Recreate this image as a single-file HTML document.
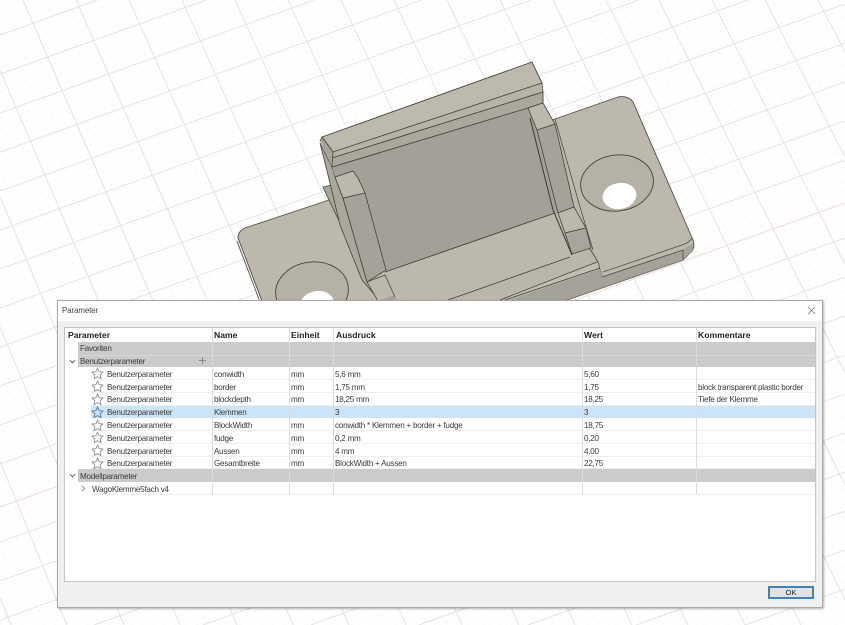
<!DOCTYPE html>
<html>
<head>
<meta charset="utf-8">
<style>
html,body{margin:0;padding:0;background:#fff;width:845px;height:625px;overflow:hidden}
#p{position:relative;width:845px;height:625px;overflow:hidden;background:#fff;font-family:"Liberation Sans",sans-serif;color:#3a3a3a}
svg.bg{position:absolute;left:0;top:0;filter:blur(.3px)}
#d{position:absolute;left:57px;top:300px;width:764px;height:306px;background:#f0f0f0;border:1px solid #a8a8a8;box-shadow:1px 1px 2px rgba(0,0,0,.3)}
#tb{position:absolute;left:0;top:0;width:764px;height:20px;background:#fff}
#tt{position:absolute;left:4px;top:5px;font-size:8px;letter-spacing:-.15px;line-height:10px;color:#444;filter:blur(.25px)}
#t{position:absolute;left:6px;top:26px;width:750px;height:253px;background:#fff;border:1px solid #c4c4c4;overflow:hidden}
.a{position:absolute;white-space:nowrap;font-size:8.1px;letter-spacing:-.24px;line-height:13px;height:13px;filter:blur(.25px)}
.h{font-weight:bold;font-size:8.6px;letter-spacing:0;color:#222;line-height:14px}
.g{position:absolute;left:13px;width:737px;height:12.8px;background:#cbcbcb}
.r{position:absolute;left:26px;width:724px;height:12.8px;border-bottom:1px solid #efefef;box-sizing:border-box}
.v{position:absolute;width:1px;background:#dcdcdc;top:0;height:167px}
.s{position:absolute;left:26px;width:13px;height:13px}
#ok{position:absolute;left:710px;top:285px;width:42px;height:9px;border:2px solid #3f83b8;background:#dfe3e6;font-size:7.6px;line-height:9px;text-align:center;color:#222;filter:blur(.2px)}
#x{position:absolute;left:749px;top:5px}
</style>
</head>
<body>
<div id="p">
<svg class="bg" width="845" height="625" viewBox="0 0 845 625">
<defs>
<pattern id="m" patternUnits="userSpaceOnUse" width="1" height="1" patternTransform="matrix(9.4,-3.35,2.95,6.8,33.3,23.3)">
<path d="M0 0H1M0 0V1" stroke="#f6f6f6" stroke-width=".1" fill="none"/>
</pattern>
</defs>
<rect width="845" height="625" fill="#fff"/>
<rect width="845" height="625" fill="url(#m)"/>
<path stroke="#e4e4e4" stroke-width="1" fill="none" d="M0 598L11 625M0 461L67 625M0 327L124 625M0 197L180 625M0 70L237 625M23 0L293 625M76 0L349 625M129 0L406 625M182 0L462 625M288 0L575 625M341 0L632 625M394 0L688 625M447 0L745 625M500 0L801 625M553 0L845 600M606 0L845 485M659 0L845 373M712 0L845 264M765 0L845 157M818 0L845 52"/>
<path stroke="#e4e4e4" stroke-width="1" fill="none" d="M0 35L97 0M0 74L206 0M0 113L314 0M0 152L422 0M0 191L531 0M0 230L639 0M0 269L748 0M0 308L845 4M0 347L845 43M0 386L845 82M0 425L845 121M0 464L845 160M0 542L845 238M0 581L845 277M0 620L845 316M94 625L845 355M203 625L845 394M311 625L845 433M419 625L845 472M528 625L845 511M636 625L845 550M745 625L845 589"/>
<path stroke="#dff0df" stroke-width="1.2" fill="none" d="M235 0L519 625"/>
<path stroke="#f0dfdf" stroke-width="1.2" fill="none" d="M0 507L845 203"/>

<!-- base plate -->
<path d="M238 238Q238 231 245 228L323 202L555 119L618 97Q628 95 633 102L693 240Q695 247 692 251L683 260L564 301H262Z" fill="#bcb8ac" stroke="#4f4d47" stroke-width=".9"/>
<path d="M237 241L260 302" stroke="#5a5852" stroke-width=".9" fill="none"/>
<!-- dark front band -->
<path d="M503 301L600 268L602 277L683 250L692 244Q694 248 692 251L683 260L564 301Z" fill="#a5a299"/>
<path d="M603 272L682 245Q689 243 692 238M602 277L683 250V260" stroke="#4f4d47" stroke-width=".8" fill="none"/>
<path d="M564 301L683 260" stroke="#7d6f6a" stroke-width=".8" fill="none"/>
<!-- holes -->
<ellipse cx="617" cy="183" rx="36.5" ry="28" transform="rotate(-8 617 183)" fill="#b5b1a5" stroke="#45433e" stroke-width=".9"/>
<ellipse cx="619.5" cy="196" rx="17" ry="13" transform="rotate(-10 619.5 196)" fill="#fff"/>
<ellipse cx="312" cy="291" rx="36.5" ry="29" transform="rotate(-8 312 291)" fill="#b5b1a5" stroke="#45433e" stroke-width=".9"/>
<ellipse cx="317" cy="304" rx="17" ry="13" transform="rotate(-10 317 304)" fill="#fff"/>

<!-- tab -->
<path d="M323 187L332 185L341 225L329 200Z" fill="#a8a59b" stroke="#45433e" stroke-width=".8"/>
<!-- left side strip -->
<path d="M320 143L332 167L335 177L343 198L367 282L380 301L362 280L340 225L330 183Z" fill="#aaa79d" stroke="#45433e" stroke-width=".8"/>

<!-- back wall -->
<path d="M332 167L520 102L528 106L543 103L558 213L385 272L365 193L353 171L335 177Z" fill="#a3a097"/>
<!-- floor -->
<path d="M385 272L555 213L572 255L590 249L598 262L602 277L503 301H396Z" fill="#bcb8ac"/>
<path d="M385 272L555 213" stroke="#45433e" stroke-width=".9" fill="none"/>
<!-- front rail -->
<path d="M448 301L570 257L590 249L597 262L500 301Z" fill="#bab6aa"/>
<path d="M500 301L597 262L600 268L507 301Z" fill="#c2beb2"/>
<path d="M448 300L570 257M500 300L597 262M590 249L598 262L602 277M505 300L600 268" stroke="#45433e" stroke-width=".8" fill="none"/>
<path d="M506 301L600 269L602 277L564 301Z" fill="#a5a299"/>

<!-- top ridge -->
<path d="M322 137L532 62L542 83L333 152Z" fill="#bdb9ad" stroke="#45433e" stroke-width=".9"/>
<path d="M333 152L542 83L543 93L332 158Z" fill="#b7b3a7" stroke="#4f4d47" stroke-width=".8"/>
<path d="M332 158L543 92L543 103L528 108L332 167Z" fill="#aaa79d" stroke="#45433e" stroke-width=".9"/>
<path d="M320 141L322 137L333 152L332 167" stroke="#45433e" stroke-width=".8" fill="#a8a59b"/>

<!-- left pillar -->
<path d="M343 198L365 193L386 270L367 282Z" fill="#a5a299" stroke="#45433e" stroke-width=".8"/>
<path d="M335 177L353 171L358 178L365 193L343 198Z" fill="#bcb8ac" stroke="#45433e" stroke-width=".8"/>
<path d="M367 282L385 275L395 297L378 301Z" fill="#bcb8ac" stroke="#4f4d47" stroke-width=".8"/>
<path d="M378 301L394 295L396 301Z" fill="#a5a299"/>

<!-- right pillar -->
<path d="M537 130L555 124L574 207L558 213Z" fill="#a5a299" stroke="#45433e" stroke-width=".8"/>
<path d="M528 108L543 103L555 124L537 130Z" fill="#bcb8ac" stroke="#45433e" stroke-width=".8"/>
<path d="M530 118L553 210L572 255" stroke="#3a3834" stroke-width="1" fill="none"/>
<path d="M558 213L574 207L586 228L565 233Z" fill="#bcb8ac" stroke="#45433e" stroke-width=".8"/>
<path d="M565 233L586 228L591 248L572 254Z" fill="#a8a59c" stroke="#45433e" stroke-width=".8"/>
<path d="M555 119L580 207L593 250" stroke="#4f4d47" stroke-width=".8" fill="none"/>
</svg>

<div id="d">
<div id="tb"></div>
<div id="tt">Parameter</div>
<svg id="x" width="9" height="9" viewBox="0 0 9 9"><path d="M1 1L8 8M8 1L1 8" stroke="#777" stroke-width=".8" fill="none"/></svg>

<div id="t">
<div class="g" style="top:14px"></div>
<div class="g" style="top:26.6px;border-top:1px solid #d6d6d6;box-sizing:border-box"></div>
<div class="r" style="top:39.4px"></div>
<div class="r" style="top:52.2px"></div>
<div class="r" style="top:65px"></div>
<div class="r" style="top:77.6px;background:#cce4f7;border:0"></div>
<div class="r" style="top:90.4px"></div>
<div class="r" style="top:103.2px"></div>
<div class="r" style="top:116px"></div>
<div class="r" style="top:128.6px"></div>
<div class="g" style="top:141.2px"></div>
<div class="r" style="top:154px"></div>

<div class="v" style="left:147px"></div>
<div class="v" style="left:224px"></div>
<div class="v" style="left:268px"></div>
<div class="v" style="left:517px"></div>
<div class="v" style="left:631px"></div>

<div class="a h" style="left:3px;top:0">Parameter</div>
<div class="a h" style="left:149px;top:0">Name</div>
<div class="a h" style="left:226px;top:0">Einheit</div>
<div class="a h" style="left:271px;top:0">Ausdruck</div>
<div class="a h" style="left:519px;top:0">Wert</div>
<div class="a h" style="left:633px;top:0">Kommentare</div>

<div class="a" style="left:15px;top:14px">Favoriten</div>
<div class="a" style="left:15px;top:27px">Benutzerparameter</div>
<svg style="position:absolute;left:4px;top:31px" width="7" height="5"><path d="M.8 1L3.5 3.8L6.2 1" stroke="#555" fill="none" stroke-width=".9"/></svg>
<svg style="position:absolute;left:133px;top:28px" width="9" height="9"><path d="M4.5 1V8M1 4.5H8" stroke="#888" fill="none" stroke-width="1"/></svg>

<svg class="s" style="top:39px" viewBox="0 0 13 13"><path d="M6.5 1L8.1 4.7L12 5.1L9.1 7.7L10 11.6L6.5 9.6L3 11.6L3.9 7.7L1 5.1L4.9 4.7Z" fill="none" stroke="#888" stroke-width=".8"/></svg>
<div class="a" style="left:42px;top:40px">Benutzerparameter</div><div class="a" style="left:149px;top:40px">conwidth</div><div class="a" style="left:226px;top:40px">mm</div><div class="a" style="left:270px;top:40px">5,6 mm</div><div class="a" style="left:519px;top:40px">5,60</div>

<svg class="s" style="top:52px" viewBox="0 0 13 13"><path d="M6.5 1L8.1 4.7L12 5.1L9.1 7.7L10 11.6L6.5 9.6L3 11.6L3.9 7.7L1 5.1L4.9 4.7Z" fill="none" stroke="#888" stroke-width=".8"/></svg>
<div class="a" style="left:42px;top:52.5px">Benutzerparameter</div><div class="a" style="left:149px;top:52.5px">border</div><div class="a" style="left:226px;top:52.5px">mm</div><div class="a" style="left:270px;top:52.5px">1,75 mm</div><div class="a" style="left:519px;top:52.5px">1,75</div><div class="a" style="left:633px;top:52.5px">block transparent plastic border</div>

<svg class="s" style="top:65px" viewBox="0 0 13 13"><path d="M6.5 1L8.1 4.7L12 5.1L9.1 7.7L10 11.6L6.5 9.6L3 11.6L3.9 7.7L1 5.1L4.9 4.7Z" fill="none" stroke="#888" stroke-width=".8"/></svg>
<div class="a" style="left:42px;top:65px">Benutzerparameter</div><div class="a" style="left:149px;top:65px">blockdepth</div><div class="a" style="left:226px;top:65px">mm</div><div class="a" style="left:270px;top:65px">18,25 mm</div><div class="a" style="left:519px;top:65px">18,25</div><div class="a" style="left:633px;top:65px">Tiefe der Klemme</div>

<svg class="s" style="top:77.5px" viewBox="0 0 13 13"><path d="M6.5 1L8.1 4.7L12 5.1L9.1 7.7L10 11.6L6.5 9.6L3 11.6L3.9 7.7L1 5.1L4.9 4.7Z" fill="none" stroke="#5a7a9a" stroke-width=".9"/></svg>
<div class="a" style="left:42px;top:78px">Benutzerparameter</div><div class="a" style="left:149px;top:78px">Klemmen</div><div class="a" style="left:270px;top:78px">3</div><div class="a" style="left:519px;top:78px">3</div>

<svg class="s" style="top:90.5px" viewBox="0 0 13 13"><path d="M6.5 1L8.1 4.7L12 5.1L9.1 7.7L10 11.6L6.5 9.6L3 11.6L3.9 7.7L1 5.1L4.9 4.7Z" fill="none" stroke="#888" stroke-width=".8"/></svg>
<div class="a" style="left:42px;top:91px">Benutzerparameter</div><div class="a" style="left:149px;top:91px">BlockWidth</div><div class="a" style="left:226px;top:91px">mm</div><div class="a" style="left:270px;top:91px">conwidth * Klemmen + border + fudge</div><div class="a" style="left:519px;top:91px">18,75</div>

<svg class="s" style="top:103px" viewBox="0 0 13 13"><path d="M6.5 1L8.1 4.7L12 5.1L9.1 7.7L10 11.6L6.5 9.6L3 11.6L3.9 7.7L1 5.1L4.9 4.7Z" fill="none" stroke="#888" stroke-width=".8"/></svg>
<div class="a" style="left:42px;top:104px">Benutzerparameter</div><div class="a" style="left:149px;top:104px">fudge</div><div class="a" style="left:226px;top:104px">mm</div><div class="a" style="left:270px;top:104px">0,2 mm</div><div class="a" style="left:519px;top:104px">0,20</div>

<svg class="s" style="top:116px" viewBox="0 0 13 13"><path d="M6.5 1L8.1 4.7L12 5.1L9.1 7.7L10 11.6L6.5 9.6L3 11.6L3.9 7.7L1 5.1L4.9 4.7Z" fill="none" stroke="#888" stroke-width=".8"/></svg>
<div class="a" style="left:42px;top:116.5px">Benutzerparameter</div><div class="a" style="left:149px;top:116.5px">Aussen</div><div class="a" style="left:226px;top:116.5px">mm</div><div class="a" style="left:270px;top:116.5px">4 mm</div><div class="a" style="left:519px;top:116.5px">4,00</div>

<svg class="s" style="top:128.5px" viewBox="0 0 13 13"><path d="M6.5 1L8.1 4.7L12 5.1L9.1 7.7L10 11.6L6.5 9.6L3 11.6L3.9 7.7L1 5.1L4.9 4.7Z" fill="none" stroke="#888" stroke-width=".8"/></svg>
<div class="a" style="left:42px;top:129px">Benutzerparameter</div><div class="a" style="left:149px;top:129px">Gesamtbreite</div><div class="a" style="left:226px;top:129px">mm</div><div class="a" style="left:270px;top:129px">BlockWidth + Aussen</div><div class="a" style="left:519px;top:129px">22,75</div>

<div class="a" style="left:15px;top:142px">Modellparameter</div>
<svg style="position:absolute;left:4px;top:145px" width="7" height="5"><path d="M.8 1L3.5 3.8L6.2 1" stroke="#555" fill="none" stroke-width=".9"/></svg>
<svg style="position:absolute;left:16px;top:157px" width="5" height="7"><path d="M1 .8L3.8 3.5L1 6.2" stroke="#888" fill="none" stroke-width=".9"/></svg>
<div class="a" style="left:27px;top:155px">WagoKlemme5fach v4</div>
</div>

<div id="ok">OK</div>
</div>
</div>
</body>
</html>
